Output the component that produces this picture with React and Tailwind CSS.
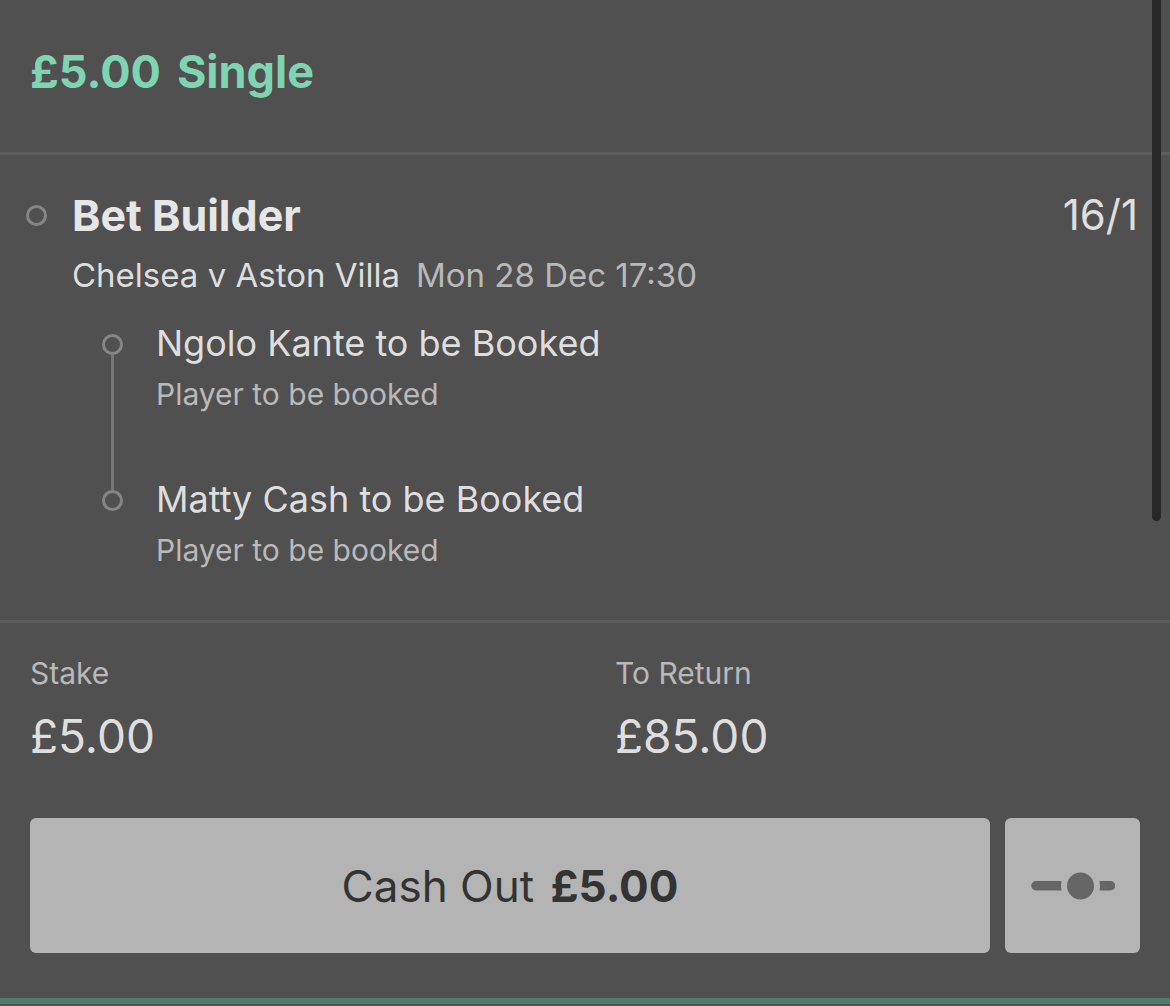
const LEGS = [
  { name: "Ngolo Kante to be Booked", market: "Player to be booked" },
  { name: "Matty Cash to be Booked", market: "Player to be booked" },
];

function Dot() {
  return <span className="block w-[21px] h-[21px] shrink-0 rounded-full border-3 border-[#858585]" />;
}

function BetHeader() {
  return (
    <header className="h-[155px] px-[30px] pt-[47px] border-b-3 border-[#5d5d5d]">
      <h1 className="flex gap-4 text-[45px] leading-[50px] font-bold text-[#7fd4b2]">
        <span>£5.00</span>
        <span>Single</span>
      </h1>
    </header>
  );
}

function Selection() {
  return (
    <section className="pl-[26px] pr-8 pt-[34px] pb-[45px] border-b-3 border-[#5d5d5d]">
      <div className="flex items-center h-[52px]">
        <Dot />
        <h2 className="ml-[25px] flex-1 text-[43px] leading-[52px] font-bold text-[#e6e6e6]">Bet Builder</h2>
        <span className="text-[42px] leading-[52px] text-[#dedede]">16/1</span>
      </div>
      <p className="ml-[46px] mt-[14px] flex flex-wrap gap-x-4 text-[33px] leading-10 text-[#dedede]">
        <span>Chelsea v Aston Villa</span>
        <span className="text-[#b9b9b9]">Mon 28 Dec 17:30</span>
      </p>
      <ul className="ml-[76px] mt-[22px]">
        {LEGS.map((leg, i) => (
          <li key={leg.name} className="flex gap-[33px] h-[156px] last:h-auto">
            <div className="flex flex-col items-center pt-[17px]">
              <Dot />
              {i < LEGS.length - 1 && <span className="-mb-[17px] w-[3px] flex-1 bg-[#757575]" />}
            </div>
            <div>
              <h3 className="text-[36px] leading-[52px] text-[#dedede]">{leg.name}</h3>
              <p className="text-[30px] leading-[50px] text-[#b9b9b9]">{leg.market}</p>
            </div>
          </li>
        ))}
      </ul>
    </section>
  );
}

function Amount({ label, value }) {
  return (
    <div className="px-[30px]">
      <dt className="text-[30px] leading-10 text-[#b9b9b9]">{label}</dt>
      <dd className="mt-4 text-[46px] leading-[54px] text-[#dedede]">{value}</dd>
    </div>
  );
}

export default function App() {
  return (
    <main className="relative min-h-screen flex flex-col bg-[#505050] font-[Inter,sans-serif]">
      <BetHeader />
      <Selection />
      <dl className="grid grid-cols-2 pt-[30px]">
        <Amount label="Stake" value="£5.00" />
        <Amount label="To Return" value="£85.00" />
      </dl>
      <div className="flex gap-[15px] px-[30px] pt-[55px]">
        <button className="flex-1 h-[135px] rounded-md bg-[#b4b4b4] text-[44px] text-[#333333]">
          Cash Out <b className="ml-1">£5.00</b>
        </button>
        <button
          aria-label="Partial cash out"
          className="w-[135px] h-[135px] rounded-md bg-[#b4b4b4] flex items-center justify-center"
        >
          <svg width="84" height="28" viewBox="0 0 84 28" fill="#666666">
            <path d="M5 9H30.500Q29.500 14 30.500 18.500H5A4.750 4.750 0 0 1 5 9Z" />
            <circle cx="49.500" cy="14" r="13.500" />
            <path d="M68.500 9H79.500A4.750 4.750 0 0 1 79.500 18.500H68.500Q69.500 14 68.500 9Z" />
          </svg>
        </button>
      </div>
      <div className="mt-auto mb-0.5 h-1.5 bg-[#4d7d6c]" />
      <div className="absolute top-0 right-[9px] w-[9px] h-[521px] rounded-b-full bg-[#282828]" />
    </main>
  );
}
